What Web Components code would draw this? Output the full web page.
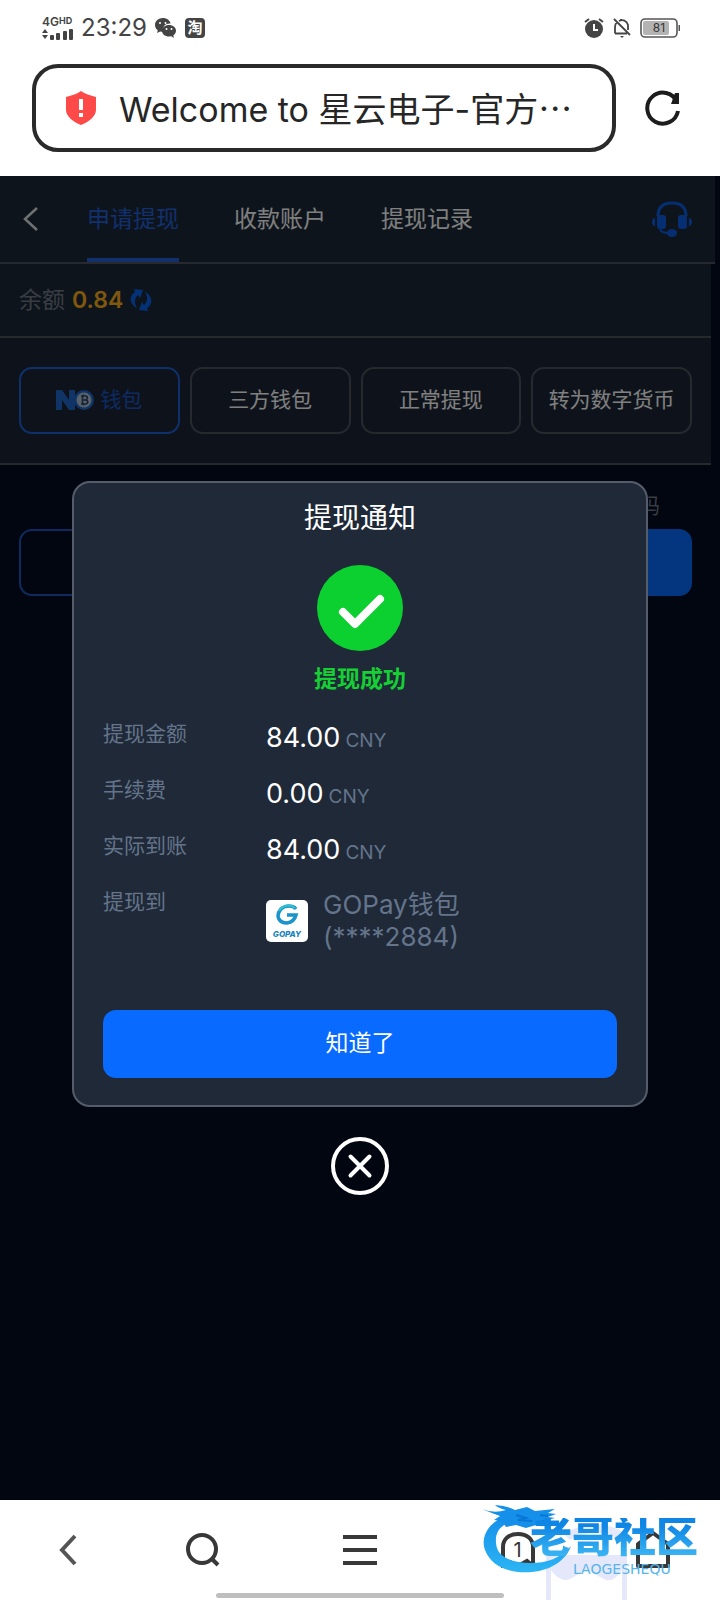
<!DOCTYPE html>
<html lang="zh-CN">
<head>
<meta charset="utf-8">
<meta name="viewport" content="width=device-width, initial-scale=1">
<title>星云电子-官方</title>
<style>
  html, body { margin: 0; }
  body {
    min-height: 100vh; display: flex; flex-direction: column; background: #fff;
    font-family: Inter, "Noto Sans CJK SC", sans-serif;
  }
</style>
</head>
<body>
<phone-status time="23:29" battery="81"></phone-status>
<address-bar value="Welcome to 星云电子-官方⋯"></address-bar>
<web-view>
  <page-header>
    <tab-link active>申请提现</tab-link>
    <tab-link>收款账户</tab-link>
    <tab-link>提现记录</tab-link>
  </page-header>
  <balance-row label="余额">0.84</balance-row>
  <wallet-picker>
    <pill-button active><no-coin></no-coin>钱包</pill-button>
    <pill-button>三方钱包</pill-button>
    <pill-button>正常提现</pill-button>
    <pill-button>转为数字货币</pill-button>
  </wallet-picker>
  <action-row>码</action-row>
  <notice-dialog slot="overlay" heading="提现通知" status="提现成功" action="知道了">
    <detail-row label="提现金额" unit="CNY">84.00</detail-row>
    <detail-row label="手续费" unit="CNY">0.00</detail-row>
    <detail-row label="实际到账" unit="CNY">84.00</detail-row>
    <payee-row label="提现到"><span>GOPay钱包</span><span>(****2884)</span></payee-row>
  </notice-dialog>
</web-view>
<browser-toolbar></browser-toolbar>

<script>
const define = (name, render) => customElements.define(name, class extends HTMLElement {
  constructor() {
    super();
    this.attachShadow({ mode: 'open' });
  }
  connectedCallback() {
    this.shadowRoot.innerHTML = render(this);
  }
});
const attr = (el, name) => el.getAttribute(name) || '';

define('phone-status', el => `
  <style>
    :host { display: flex; align-items: center; justify-content: space-between; height: 56px; padding: 0 40px 0 42px; color: #444; }
    div { display: flex; align-items: center; }
    svg { display: block; flex: none; }
    .net { display: flex; flex-direction: column; width: 32px; }
    .net b { font-size: 12px; line-height: 12px; display: flex; align-items: flex-start; font-weight: 600; }
    .net small { font-size: 9px; line-height: 9px; font-weight: 700; }
    time { font-size: 24px; line-height: 28px; margin: 0 8px 0 7px; }
    .tao { width: 20px; height: 20px; border-radius: 4px; background: #444; color: #fff; font-size: 15px; line-height: 20px; font-weight: 700; text-align: center; margin-left: 9px; display: block; }
    .cell { position: relative; width: 40px; height: 20px; margin-left: 8px; }
    .cell span { position: absolute; inset: 0 2px 0 0; text-align: center; font-size: 12px; line-height: 20px; color: #333; }
    .bell { margin-left: 8px; }
  </style>
  <div>
    <span class="net"><b>4G<small>HD</small></b>
      <svg width="32" height="12" viewBox="0 0 32 12" fill="#444"><path d="M0 5l3-4 3 4zM0 7h6l-3 4z"/><rect x="8" y="7" width="4" height="5" rx="1"/><rect x="14" y="5" width="4" height="7" rx="1"/><rect x="21" y="3" width="4" height="9" rx="1"/><rect x="27" y="1" width="4" height="11" rx="1"/></svg>
    </span>
    <time>${attr(el, 'time')}</time>
    <svg width="21" height="20" viewBox="0 0 21 20"><path d="M8 0C3.400 0 0 3 0 7c0 2.300 1 4 2.800 5.300L2 15l3.200-1.600L8 14h.6C6.500 8 11 5 15.600 5.500 14.800 2.200 11.700 0 8 0z" fill="#444"/><path d="M14 7c-4 0-7 2.500-7 5.800s3 5.800 7 5.800l2.200-.3L19 20l-.7-2.500c1.700-1.200 2.700-2.800 2.700-4.700C21 9.500 18 7 14 7z" fill="#444"/><g fill="#fff"><circle cx="5" cy="5" r="1"/><circle cx="10.500" cy="5" r="1"/><circle cx="11.500" cy="11" r="1"/><circle cx="16.500" cy="11" r="1"/></g></svg>
    <span class="tao">淘</span>
  </div>
  <div>
    <svg width="20" height="20" viewBox="0 0 20 20" fill="none" stroke="#444"><circle cx="10" cy="11" r="9" fill="#444" stroke="none"/><path d="M1 4l4-3M19 4l-4-3" stroke-width="2"/><path d="M10 6v6h4" stroke="#fff" stroke-width="2"/></svg>
    <svg class="bell" width="20" height="20" viewBox="0 0 20 20" fill="none" stroke="#444" stroke-width="1.800"><path d="M2 1l16 16M3 15.500V9c0-2 .6-3.400 1.800-4.600M3 15.500h12M7 3c3.500-1.800 8-.5 9 4v5M9 3V1"/><path d="M8 18h4l-2 2z" fill="#444" stroke="none"/></svg>
    <span class="cell"><svg width="40" height="20" viewBox="0 0 40 20"><rect x="1" y="1" width="36" height="18" rx="4" fill="#fff" stroke="#555" stroke-width="1.600"/><rect x="3" y="3" width="26" height="14" rx="2" fill="#b3b3b3"/><rect x="38.500" y="7" width="1.500" height="6" fill="#555"/></svg><span>${attr(el, 'battery')}</span></span>
  </div>`);

define('address-bar', el => `
  <style>
    :host { display: flex; align-items: center; gap: 28px; padding: 8px 38px 24px 32px; }
    label { flex: 1; min-width: 0; box-sizing: border-box; height: 88px; border: 4px solid #2a2a2a; border-radius: 26px; display: flex; align-items: center; padding: 0 16px 0 29px; gap: 22px; }
    svg { display: block; flex: none; }
    input { flex: 1; min-width: 0; border: 0; padding: 4px 0 0; outline: 0; background: none; color: #262626; font: 400 34px/44px Inter, "Noto Sans CJK SC", sans-serif; }
    button { border: 0; padding: 0; background: none; }
  </style>
  <label>
    <svg width="32" height="34" viewBox="0 0 32 34"><path d="M16 0c4 3 9 4.500 15 6v13c0 6-7 12-15 15C8 31 1 25 1 19V6c6-1.500 11-3 15-6z" fill="#fd4a48"/><path d="M16 8v11" stroke="#fff" stroke-width="4"/><path d="M16 22v4" stroke="#fff" stroke-width="4"/></svg>
    <input type="text" aria-label="网址" value="${attr(el, 'value')}">
  </label>
  <button aria-label="刷新"><svg width="38" height="36" viewBox="0 0 38 36" fill="none" stroke="#1c1c1c" stroke-width="4"><path d="M34 21A15.500 15.500 0 1 1 33 12"/><path d="M31 3h4v11h-8z" fill="#1c1c1c" stroke="none"/></svg></button>`);

define('web-view', () => `
  <style>
    :host { position: relative; flex: 1; display: flex; flex-direction: column; background: #020c20; color: #fff; }
    .shade { position: absolute; inset: 0; display: flex; align-items: center; justify-content: center; background: rgba(0, 0, 0, .5); }
  </style>
  <slot></slot>
  <div class="shade"><slot name="overlay"></slot></div>`);

define('page-header', () => `
  <style>
    :host { display: flex; align-items: stretch; box-sizing: border-box; height: 88px; margin-right: 5px; padding: 0 22px 0 23px; background: #1b2938; border-bottom: 2px solid #4c545f; }
    button { border: 0; padding: 0; background: none; }
    svg { display: block; }
    .back { width: 64px; }
    nav { flex: 1; display: flex; gap: 55px; }
  </style>
  <button class="back" aria-label="返回"><svg width="16" height="24" viewBox="0 0 16 24" fill="none" stroke="#dde0e4" stroke-width="2.500"><path d="M14 1L2 12l12 11"/></svg></button>
  <nav><slot></slot></nav>
  <button aria-label="客服"><svg width="42" height="38" viewBox="0 0 42 38" fill="#0b5fe4"><path d="M7 16C7 6 13 3 21 3s14 3 14 13" fill="none" stroke="#0b5fe4" stroke-width="3"/><rect x="6" y="15" width="9" height="14" rx="3"/><rect x="27" y="15" width="9" height="14" rx="3"/><path d="M9 28c0 4 4 5 9 5" fill="none" stroke="#0b5fe4" stroke-width="2"/><ellipse cx="21" cy="33" rx="5" ry="4"/><path d="M4 18v8c-4 0-4-8 0-8zM38 18v8c4 0 4-8 0-8z"/></svg></button>`);

define('tab-link', el => `
  <style>
    :host { display: flex; }
    a { display: flex; align-items: center; box-sizing: border-box; height: 86px; font-size: 23px; line-height: 32px; color: #fff; text-decoration: none; border: solid transparent; border-width: 4px 0; }
    a.on { color: #2460d8; border-bottom-color: #2460d8; }
  </style>
  <a href="#" class="${el.hasAttribute('active') ? 'on' : ''}"><slot></slot></a>`);

define('balance-row', el => `
  <style>
    :host { display: flex; align-items: center; box-sizing: border-box; height: 74px; margin-right: 9px; padding: 0 19px; gap: 7px; background: #1b2938; border-bottom: 2px solid #4c545f; font-size: 23px; line-height: 32px; color: #727a86; }
    b { color: #ffb01a; font-weight: 600; }
    button { border: 0; padding: 0; background: none; }
    svg { display: block; }
  </style>
  <span>${attr(el, 'label')}</span><b><slot></slot></b>
  <button aria-label="刷新余额"><svg width="22" height="24" viewBox="0 0 22 24" fill="#0b63ee"><path d="M4 1l9 1-3 8-2-3c-4 4-4 8-1 13C-1 16-1 7 5 4zM18 23l-9-1 3-8 2 3c4-4 4-8 1-13 8 4 8 13 2 16z"/></svg></button>`);

define('wallet-picker', () => `
  <style>
    :host { display: grid; grid-template-columns: repeat(4, 1fr); gap: 10px; box-sizing: border-box; margin-right: 9px; padding: 29px 19px; background: #1d2736; border-bottom: 2px solid #4c545f; }
  </style>
  <slot></slot>`);

define('pill-button', el => `
  <style>
    :host { display: block; }
    button { width: 100%; height: 67px; box-sizing: border-box; padding: 0 0 2px; display: flex; align-items: center; justify-content: center; gap: 5px; border: 2px solid #4c545f; border-radius: 13px; background: none; color: #fff; font: inherit; font-size: 21px; line-height: 30px; white-space: nowrap; }
    .on { border-color: #1c62d8; color: #1a56c4; }
  </style>
  <button class="${el.hasAttribute('active') ? 'on' : ''}"><slot></slot></button>`);

define('no-coin', () => `
  <style>:host { display: block; } svg { display: block; }</style>
  <svg width="39" height="20" viewBox="0 0 39 20"><path d="M0 20V0h6l7 10V0h6v20h-6L6 10v10z" fill="#2068cc"/><circle cx="28" cy="10" r="10" fill="#2068cc"/><circle cx="28" cy="10" r="7.500" fill="#b4c4d8"/><path d="M25 6h4.500c2.500 0 2.500 3.500 0 4 3 .3 3 4 0 4H25M26.500 6v8M26.500 10h3M27.500 4.500V6M27.500 14v1.500" fill="none" stroke="#2c4468" stroke-width="1.600"/></svg>`);

define('action-row', () => `
  <style>
    :host { display: block; margin-right: 9px; padding: 26px 19px 0; color: #727a86; }
    p { margin: 0; padding-right: 32px; text-align: right; font-size: 21px; line-height: 30px; }
    div { display: grid; grid-template-columns: 1fr 1fr; gap: 10px; padding-top: 8px; }
    button { height: 67px; border: 2px solid #1c54bc; border-radius: 13px; background: none; }
    .fill { border-color: #086aff; background: #086aff; }
  </style>
  <p><slot></slot></p>
  <div><button aria-label="取消"></button><button class="fill" aria-label="确认"></button></div>`);

define('notice-dialog', el => `
  <style>
    :host { display: flex; flex-direction: column; align-items: center; gap: 30px; width: 80%; }
    section { width: 100%; box-sizing: border-box; padding: 17px 29px 27px; border: 2px solid #555d6b; border-radius: 18px; background: #1f2937; display: flex; flex-direction: column; align-items: center; }
    h2 { margin: 0 0 29px; font-size: 28px; line-height: 36px; font-weight: 400; }
    svg { display: block; }
    .ok { margin: 14px 0 15px; color: #16cf35; font-size: 23px; line-height: 28px; font-weight: 700; }
    .rows { width: 100%; }
    button { border: 0; padding: 0; background: none; }
    .go { width: 100%; height: 68px; margin-top: 57px; padding-bottom: 2px; border-radius: 13px; background: #086aff; color: #fff; font: inherit; font-size: 23px; line-height: 32px; }
  </style>
  <section role="dialog" aria-label="${attr(el, 'heading')}">
    <h2>${attr(el, 'heading')}</h2>
    <svg width="86" height="86" viewBox="0 0 86 86"><circle cx="43" cy="43" r="43" fill="#0bd02f"/><path d="M26 47l12 12 25-25" fill="none" stroke="#fff" stroke-width="8" stroke-linecap="round" stroke-linejoin="round"/></svg>
    <strong class="ok">${attr(el, 'status')}</strong>
    <div class="rows"><slot></slot></div>
    <button class="go">${attr(el, 'action')}</button>
  </section>
  <button aria-label="关闭"><svg width="58" height="58" viewBox="0 0 58 58" fill="none" stroke="#fff" stroke-width="4"><circle cx="29" cy="29" r="27"/><path d="M19.500 19.500l19 19M38.500 19.500l-19 19" stroke-linecap="round"/></svg></button>`);

define('detail-row', el => `
  <style>
    :host { display: block; }
    dl { margin: 0; display: grid; grid-template-columns: 163px 1fr; height: 56px; }
    dt { font-size: 21px; line-height: 52px; color: #64748b; }
    dd { margin: 0; font-size: 27px; line-height: 60px; }
    small { font-size: 19px; color: #64748b; margin-left: 5px; }
  </style>
  <dl><dt>${attr(el, 'label')}</dt><dd><slot></slot><small>${attr(el, 'unit')}</small></dd></dl>`);

define('payee-row', el => `
  <style>
    :host { display: block; }
    dl { margin: 0; display: grid; grid-template-columns: 163px 1fr; }
    dt { font-size: 21px; line-height: 52px; color: #64748b; }
    dd { margin: 0; padding-top: 13px; display: flex; align-items: center; gap: 15px; font-size: 26px; line-height: 32px; color: #64748b; }
    .name { display: flex; flex-direction: column; }
    .logo { width: 42px; height: 42px; flex: none; border-radius: 5px; background: #fff; display: flex; flex-direction: column; align-items: center; justify-content: space-evenly; }
    .logo b { font-size: 8px; line-height: 8px; font-style: italic; font-weight: 800; color: #1684bd; }
    svg { display: block; }
  </style>
  <dl><dt>${attr(el, 'label')}</dt><dd>
    <span class="logo"><svg width="23" height="22" viewBox="0 0 23 22"><path d="M20 5C17 1 9 1 5 5c-6 7-2 14 6 14 6-1 8-4 9-8h-9" fill="none" stroke="#1b93cd" stroke-width="3.500"/><path d="M3 7C7 1 14 0 19 4" fill="none" stroke="#31c3c9" stroke-width="2"/></svg><b>GOPAY</b></span>
    <span class="name"><slot></slot></span></dd></dl>`);

define('browser-toolbar', () => `
  <style>
    :host { position: relative; display: block; height: 100px; background: #fff; overflow: hidden; }
    nav { display: grid; grid-template-columns: 3fr 3fr 4fr 3fr 3fr; height: 100px; }
    button { border: 0; padding: 0; background: none; display: flex; align-items: center; justify-content: center; position: relative; }
    svg { display: block; }
    button span { position: absolute; inset: 0; text-align: center; font: 400 20px/100px Inter, sans-serif; color: #333; }
    .pill { position: absolute; left: 30%; right: 30%; bottom: 2px; height: 5px; border-radius: 3px; background: #bfbfbf; }
    .mark { position: absolute; right: 0; top: 0; width: 240px; height: 100px; pointer-events: none; }
    .mark svg { position: absolute; inset: 0; }
    .mark b { position: absolute; left: 50px; top: 18px; font: 900 42px/40px "Liberation Sans", "Noto Sans CJK SC", sans-serif; white-space: nowrap; color: transparent; background: linear-gradient(#0f86e4 20%, #38b2f2 90%); background-clip: text; -webkit-background-clip: text; }
    .mark small { position: absolute; left: 93px; top: 62px; font: 400 14px/14px "DejaVu Sans", sans-serif; color: #55b5ec; }
  </style>
  <nav>
    <button aria-label="后退"><svg width="18" height="32" viewBox="0 0 18 32" fill="none" stroke="#555" stroke-width="4"><path d="M16 2L3 16l13 14"/></svg></button>
    <button aria-label="搜索"><svg width="34" height="34" viewBox="0 0 34 34" fill="none" stroke="#383838" stroke-width="4"><circle cx="16" cy="16" r="14"/><path d="M25 25l7 7"/></svg></button>
    <button aria-label="菜单"><svg width="34" height="32" viewBox="0 0 34 32" fill="none" stroke="#383838" stroke-width="4"><path d="M0 3h34M0 16h34M0 29h34"/></svg></button>
    <button aria-label="标签页"><svg width="34" height="36" viewBox="0 0 34 36" fill="none" stroke="#383838" stroke-width="4"><path d="M2 34V15C2 7 8 2 17 2s15 5 15 13v19l-6-5-9 5-8-4z"/></svg><span>1</span></button>
    <button aria-label="主页"><svg width="34" height="38" viewBox="0 0 34 38" fill="none" stroke="#383838" stroke-width="4" stroke-linejoin="round"><path d="M2 35V13L17 2l15 11v22z"/></svg></button>
  </nav>
  <div class="pill"></div>
  <div class="mark">
    <svg width="240" height="100" viewBox="0 0 240 100">
      <defs><linearGradient id="sea" x1="0" y1="0" x2="0" y2="1"><stop offset="0" stop-color="#148fea"/><stop offset="1" stop-color="#2cb5f4"/></linearGradient></defs>
      <g fill="#dfe3fb" opacity=".8"><path d="M84 34q32-20 62 0l-6 6q-26-14-50 0z"/><path d="M66 55h81v45h-5V70q-9 14-18 9l-17-9-17 9q-10 4-19-9v30h-5z"/></g>
      <path d="M28 15C9 21 0 37 5 50c7 18 27 24 47 22 20-2 34-12 39-26-11 13-25 17-40 17-20 0-34-6-35-20-1-12 5-20 22-22z" fill="url(#sea)"/>
      <path d="M2 9q12 5 24 1-8-2-11-5 13 1 20 5l12-3 8 4 20-2-7 4 8 1-8 3 7 1-11 3 8 2q-8 5-16 2l-10 3-10-3-10 2-4-6-8-1 6-4Q14 14 2 9z" fill="#148fea"/>
      <path d="M36 15l10 3-8 2 14 1M60 15l8 1M62 21l7 1" stroke="#0876d5" stroke-width="2" fill="none"/>
    </svg>
    <b>老哥社区</b><small>LAOGESHEQU</small>
  </div>`);
</script>
</body>
</html>
